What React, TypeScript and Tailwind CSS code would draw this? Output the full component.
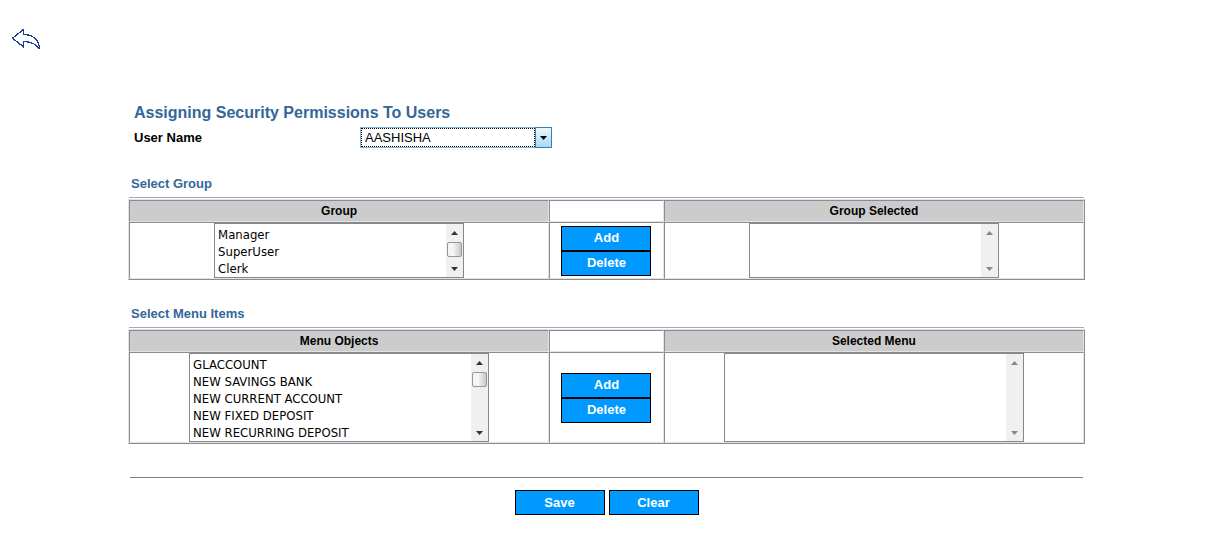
import { useId, useState } from "react";

const GROUPS = ["Manager", "SuperUser", "Clerk"];
const MENUS = [
  "GLACCOUNT",
  "NEW SAVINGS BANK",
  "NEW CURRENT ACCOUNT",
  "NEW FIXED DEPOSIT",
  "NEW RECURRING DEPOSIT",
];

function BackArrow() {
  return (
    <svg width="30" height="22" viewBox="0 0 30 22" fill="none" stroke="#1c3f8c" strokeWidth="1.3" shapeRendering="crispEdges">
      <path d="M1.5 9.2 L12.4 0.6 V5.5 C20 5.5 28 9.5 28.5 19.3 H27.6 C25 15 19 12.6 12.4 12.6 V17.8 Z" />
    </svg>
  );
}

function Chevron({ up = false, faded = false }: { up?: boolean; faded?: boolean }) {
  return (
    <svg width="7" height="4" viewBox="0 0 7 4" fill={faded ? "#888888" : "#333333"}>
      <path d={up ? "M3.5 0 L7 4 H0 Z" : "M0 0 H7 L3.5 4 Z"} />
    </svg>
  );
}

function ActionButton({ children, onClick }: { children: string; onClick?: () => void }) {
  return (
    <button
      type="button"
      onClick={onClick}
      className="h-[25px] w-[90px] border border-black bg-[#0099ff] text-[13px] leading-4 font-bold text-white"
    >
      {children}
    </button>
  );
}

type ListBoxProps = {
  label: string;
  items: string[];
  value: string[];
  onChange: (value: string[]) => void;
  wide?: boolean;
};

function ListBox({ label, items, value, onChange, wide = false }: ListBoxProps) {
  const filled = items.length > 0;
  return (
    <div className={`mx-auto flex max-w-full border border-[#828790] bg-white ${wide ? "h-[89px] w-[300px]" : "h-[55px] w-[250px]"}`}>
      <select
        multiple
        aria-label={label}
        value={value}
        onChange={(e) => onChange(Array.from(e.target.selectedOptions, (o) => o.value))}
        className="min-w-0 flex-1 appearance-none overflow-hidden bg-white pt-[3px] font-['DejaVu_Sans_Condensed','DejaVu_Sans',sans-serif] text-[13px] text-black outline-none"
      >
        {items.map((item) => (
          <option key={item} value={item} className="h-[17px] min-h-0 px-[3px] py-0 leading-[17px]">
            {item}
          </option>
        ))}
      </select>
      <div className="flex w-[17px] flex-col items-center justify-between bg-[#f0f0f0] pt-[7px] pb-[6px]">
        <div className="flex w-full flex-col items-center gap-[7px]">
          <Chevron up faded={!filled} />
          {filled && <div className="h-[15px] w-[15px] rounded-[2px] border border-[#979797] bg-linear-to-r from-[#f5f5f5] from-40% to-[#c8c8cc]" />}
        </div>
        <Chevron faded={!filled} />
      </div>
    </div>
  );
}

type TransferProps = { title: string; from: string; to: string; initial: string[]; wide?: boolean };

function Transfer({ title, from, to, initial, wide }: TransferProps) {
  const [left, setLeft] = useState(initial);
  const [right, setRight] = useState<string[]>([]);
  const [leftPick, setLeftPick] = useState<string[]>([]);
  const [rightPick, setRightPick] = useState<string[]>([]);
  const headingId = useId();

  const add = () => {
    setRight([...right, ...leftPick]);
    setLeft(left.filter((i) => !leftPick.includes(i)));
    setLeftPick([]);
  };
  const remove = () => {
    setLeft([...left, ...rightPick]);
    setRight(right.filter((i) => !rightPick.includes(i)));
    setRightPick([]);
  };

  const cell = "border border-t-[#8c8c8c] border-l-[#8c8c8c] border-r-[#e3e3e3] border-b-[#e3e3e3] p-0";
  return (
    <section aria-labelledby={headingId}>
      <h2 id={headingId} className="px-[3px] text-[13px] leading-4 font-bold text-[#336699]">
        {title}
      </h2>
      <div className="mx-px mt-[5px] h-px bg-[#9badc6]" />
      <table className="mt-px w-full table-fixed border-separate border-spacing-0 border border-t-[#e3e3e3] border-r-[#8c8c8c] border-b-[#8c8c8c] border-l-[#e3e3e3]">
        <thead>
          <tr className="h-[22px] text-[12px] leading-4">
            <th scope="col" className={`${cell} w-[44%] bg-[#cccccc]`}>{from}</th>
            <td className={`${cell} w-[12%]`} />
            <th scope="col" className={`${cell} w-[44%] bg-[#cccccc]`}>{to}</th>
          </tr>
        </thead>
        <tbody>
          <tr>
            <td className={cell}>
              <ListBox label={from} items={left} value={leftPick} onChange={setLeftPick} wide={wide} />
            </td>
            <td className={cell}>
              <div className="flex flex-col items-center">
                <ActionButton onClick={add}>Add</ActionButton>
                <ActionButton onClick={remove}>Delete</ActionButton>
              </div>
            </td>
            <td className={cell}>
              <ListBox label={to} items={right} value={rightPick} onChange={setRightPick} wide={wide} />
            </td>
          </tr>
        </tbody>
      </table>
    </section>
  );
}

export default function App() {
  return (
    <div className="bg-white font-['Liberation_Sans',Arial,sans-serif] text-black">
      <header className="px-[11px] pt-[29px]">
        <a href="#back" aria-label="Back" className="inline-block align-top">
          <BackArrow />
        </a>
      </header>
      <main className="mx-32 pt-[50px]">
        <h1 className="px-[6px] text-[16px] leading-5 font-bold text-[#336699]">Assigning Security Permissions To Users</h1>
        <div className="mt-1 flex items-center pl-[6px]">
          <label htmlFor="user" className="w-[226px] text-[13px] leading-4 font-bold">
            User Name
          </label>
          <div className="flex h-[21px] w-[192px] border border-[#7fb5da]">
            <select
              id="user"
              className="min-w-0 flex-1 appearance-none border border-dotted border-black bg-white pl-[3px] text-[13px] leading-4 outline-none"
            >
              <option>AASHISHA</option>
            </select>
            <span className="pointer-events-none -my-px -mr-px flex w-[17px] items-center justify-center border border-[#3c7fb1] bg-linear-to-b from-[#eaf6fd] to-[#a7d9f5]">
              <svg width="7" height="4" viewBox="0 0 7 4">
                <path d="M0 0 H7 L3.5 4 Z" />
              </svg>
            </span>
          </div>
        </div>
        <div className="flex flex-col gap-[26px] pt-7">
          <Transfer title="Select Group" from="Group" to="Group Selected" initial={GROUPS} />
          <Transfer title="Select Menu Items" from="Menu Objects" to="Selected Menu" initial={MENUS} wide />
        </div>
        <hr className="mx-[2px] mt-[33px] border-[#808080]" />
        <div className="flex justify-center gap-1 pt-3">
          <ActionButton>Save</ActionButton>
          <ActionButton>Clear</ActionButton>
        </div>
      </main>
    </div>
  );
}
